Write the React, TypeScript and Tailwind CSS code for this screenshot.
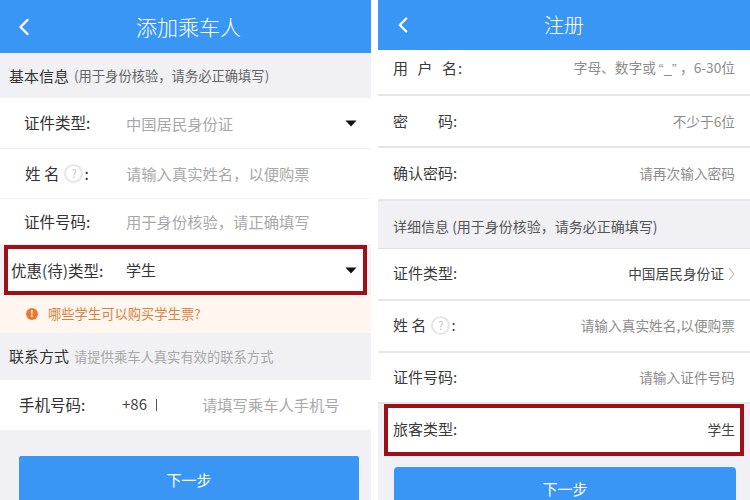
import { ChevronLeft } from 'lucide-react';

const cjk = 'font-["Noto_Sans_CJK_SC","Noto_Sans",sans-serif]';

const Caret = () => (
  <svg width="12" height="7" viewBox="0 0 12 7" className="shrink-0">
    <path d="M0.5 0.5H11.5L6 6.5Z" fill="#111" />
  </svg>
);

const Arrow = () => (
  <svg width="7" height="14" viewBox="0 0 7 14" fill="none" className="ml-[4px] mt-[2px] shrink-0">
    <path d="M1 1L6 7L1 13" stroke="#aaaaaa" strokeWidth="1" />
  </svg>
);

const HelpMark = () => (
  <span className="ml-[5px] mr-[1px] flex h-[19px] w-[19px] items-center justify-center rounded-full border-2 border-[#e6e6e6] text-[11px] text-[#c4c4c4]">
    ?
  </span>
);

const Header = ({ title, wide }: { title: string; wide?: boolean }) => (
  <div className={`relative flex shrink-0 items-center justify-center bg-[#3a96f5] font-light text-white ${wide ? 'h-[53px] pl-[6px] text-[21px]' : 'h-[50px] text-[20px]'}`}>
    <ChevronLeft className={`absolute ${wide ? 'left-[10px] h-[28px] w-[28px]' : 'left-[12px] h-[26px] w-[26px]'}`} strokeWidth={2} />
    <span>{title}</span>
  </div>
);

const LeftRow = ({ label, value, caret, h }: { label: React.ReactNode; value: string; caret?: boolean; h: string }) => (
  <div className={`flex shrink-0 items-center border-b border-[#f1f1f1] bg-white pl-[24px] pr-[14px] ${h}`}>
    <div className="flex w-[102px] items-center text-[15.5px] text-[#333]">{label}</div>
    <div className="flex-1 text-[15.3px] text-[#a8a8a8]">{value}</div>
    {caret && <Caret />}
  </div>
);

const RightRow = ({ label, value, dark, arrow, h }: { label: React.ReactNode; value: React.ReactNode; dark?: boolean; arrow?: boolean; h: string }) => (
  <div className={`flex shrink-0 items-center justify-between border-b-2 border-[#e6e6e6] bg-white pl-[15px] pr-[15px] ${h}`}>
    <div className="flex items-center text-[15px] text-[#3a3a3a]">{label}</div>
    <div className={`flex items-center text-[13.7px] ${dark ? 'text-[#444]' : 'text-[#8c8c8c]'}`}>
      {value}
      {arrow && <Arrow />}
    </div>
  </div>
);

export default function App() {
  return (
    <div className={`flex h-[500px] w-[750px] justify-between overflow-hidden bg-white ${cjk}`}>
      {/* left phone */}
      <div className="flex h-[500px] w-[371px] flex-col overflow-hidden bg-[#f0f0f5]">
        <Header title="添加乘车人" wide />
        <div className="flex h-[45px] shrink-0 items-center pl-[9px] pt-[1px]">
          <span className="text-[15px] text-[#333]">基本信息</span>
          <span className="ml-[5px] text-[13.3px] text-[#666]">(用于身份核验，请务必正确填写)</span>
        </div>
        <LeftRow h="h-[51px]" label="证件类型:" value="中国居民身份证" caret />
        <LeftRow h="h-[50px]" label={<><span className="ml-[1px]">姓 名</span><HelpMark />:</>} value="请输入真实姓名，以便购票" />
        <LeftRow h="h-[46px]" label="证件号码:" value="用于身份核验，请正确填写" />
        <div className="mx-[4px] flex h-[50px] shrink-0 items-center border-[4px] border-[#a00f17] bg-white pl-[3px] pr-[6px] pt-[1px]">
          <span className="w-[115px] text-[15.5px] text-[#333]">优惠(待)类型:</span>
          <span className="flex-1 text-[15px] text-[#333]">学生</span>
          <Caret />
        </div>
        <div className="flex h-[38px] shrink-0 items-center bg-[#fff6ef] pl-[26px] text-[13.3px] text-[#d98340]">
          <span className="mr-[10px] flex h-[12px] w-[12px] items-center justify-center rounded-full bg-[#ec7a2c] text-[9px] font-bold text-white">!</span>
          哪些学生可以购买学生票?
        </div>
        <div className="flex h-[47px] shrink-0 items-center pl-[9px]">
          <span className="text-[15px] text-[#333]">联系方式</span>
          <span className="ml-[5px] text-[13.3px] text-[#a8a8a8]">请提供乘车人真实有效的联系方式</span>
        </div>
        <div className="flex h-[50px] shrink-0 items-center bg-white pb-[1px] pl-[19px] text-[15px]">
          <span className="w-[103px] text-[15.5px] text-[#333]">手机号码:</span>
          <span className="text-[#444]">+86</span>
          <span className="ml-[9px] h-[12px] w-[1px] bg-[#555]" />
          <span className="ml-[45px] text-[15.3px] text-[#a8a8a8]">请填写乘车人手机号</span>
        </div>
        <div className="ml-[19px] mr-[12px] mt-[26px] flex h-[48px] shrink-0 items-center justify-center rounded-[2px] bg-[#3a96f5] text-[15px] text-white">
          下一步
        </div>
      </div>

      {/* right phone */}
      <div className="flex h-[500px] w-[372px] flex-col overflow-hidden bg-[#f0f0f5]">
        <Header title="注册" />
        <RightRow
          h="h-[46px] pb-[8px]"
          label={<span className="tracking-[1px]">用&ensp;户&ensp;名:</span>}
          value={<span>字母、数字或<span className='mx-[3px] font-["Liberation_Sans",sans-serif] tracking-[0.5px]'>“_”</span>，6-30位</span>}
        />
        <RightRow h="h-[52px]" label="密&emsp;&emsp;码:" value="不少于6位" />
        <RightRow h="h-[53px]" label="确认密码:" value="请再次输入密码" />
        <div className="flex h-[48px] shrink-0 items-center border-b border-[#e0e0e0] pl-[15px] pt-[3px] text-[14px] text-[#555]">详细信息 (用于身份核验，请务必正确填写)</div>
        <RightRow h="h-[52px] pb-[1px]" label="证件类型:" value="中国居民身份证" dark arrow />
        <RightRow h="h-[52px] pb-[1px]" label={<>姓 名<HelpMark />:</>} value="请输入真实姓名,以便购票" />
        <RightRow h="h-[51px]" label="证件号码:" value="请输入证件号码" />
        <div className="mx-[6px] flex h-[52px] shrink-0 items-center justify-between border-[4px] border-[#a00f17] bg-white pb-[1px] pl-[5px] pr-[5px] text-[15px]">
          <span className="text-[#3a3a3a]">旅客类型:</span>
          <span className="text-[13.7px] text-[#444]">学生</span>
        </div>
        <div className="ml-[16px] mr-[14px] mt-[11px] flex h-[44px] shrink-0 items-center justify-center rounded-[4px] bg-[#3a96f5] text-[15px] text-white">
          下一步
        </div>
      </div>
    </div>
  );
}
